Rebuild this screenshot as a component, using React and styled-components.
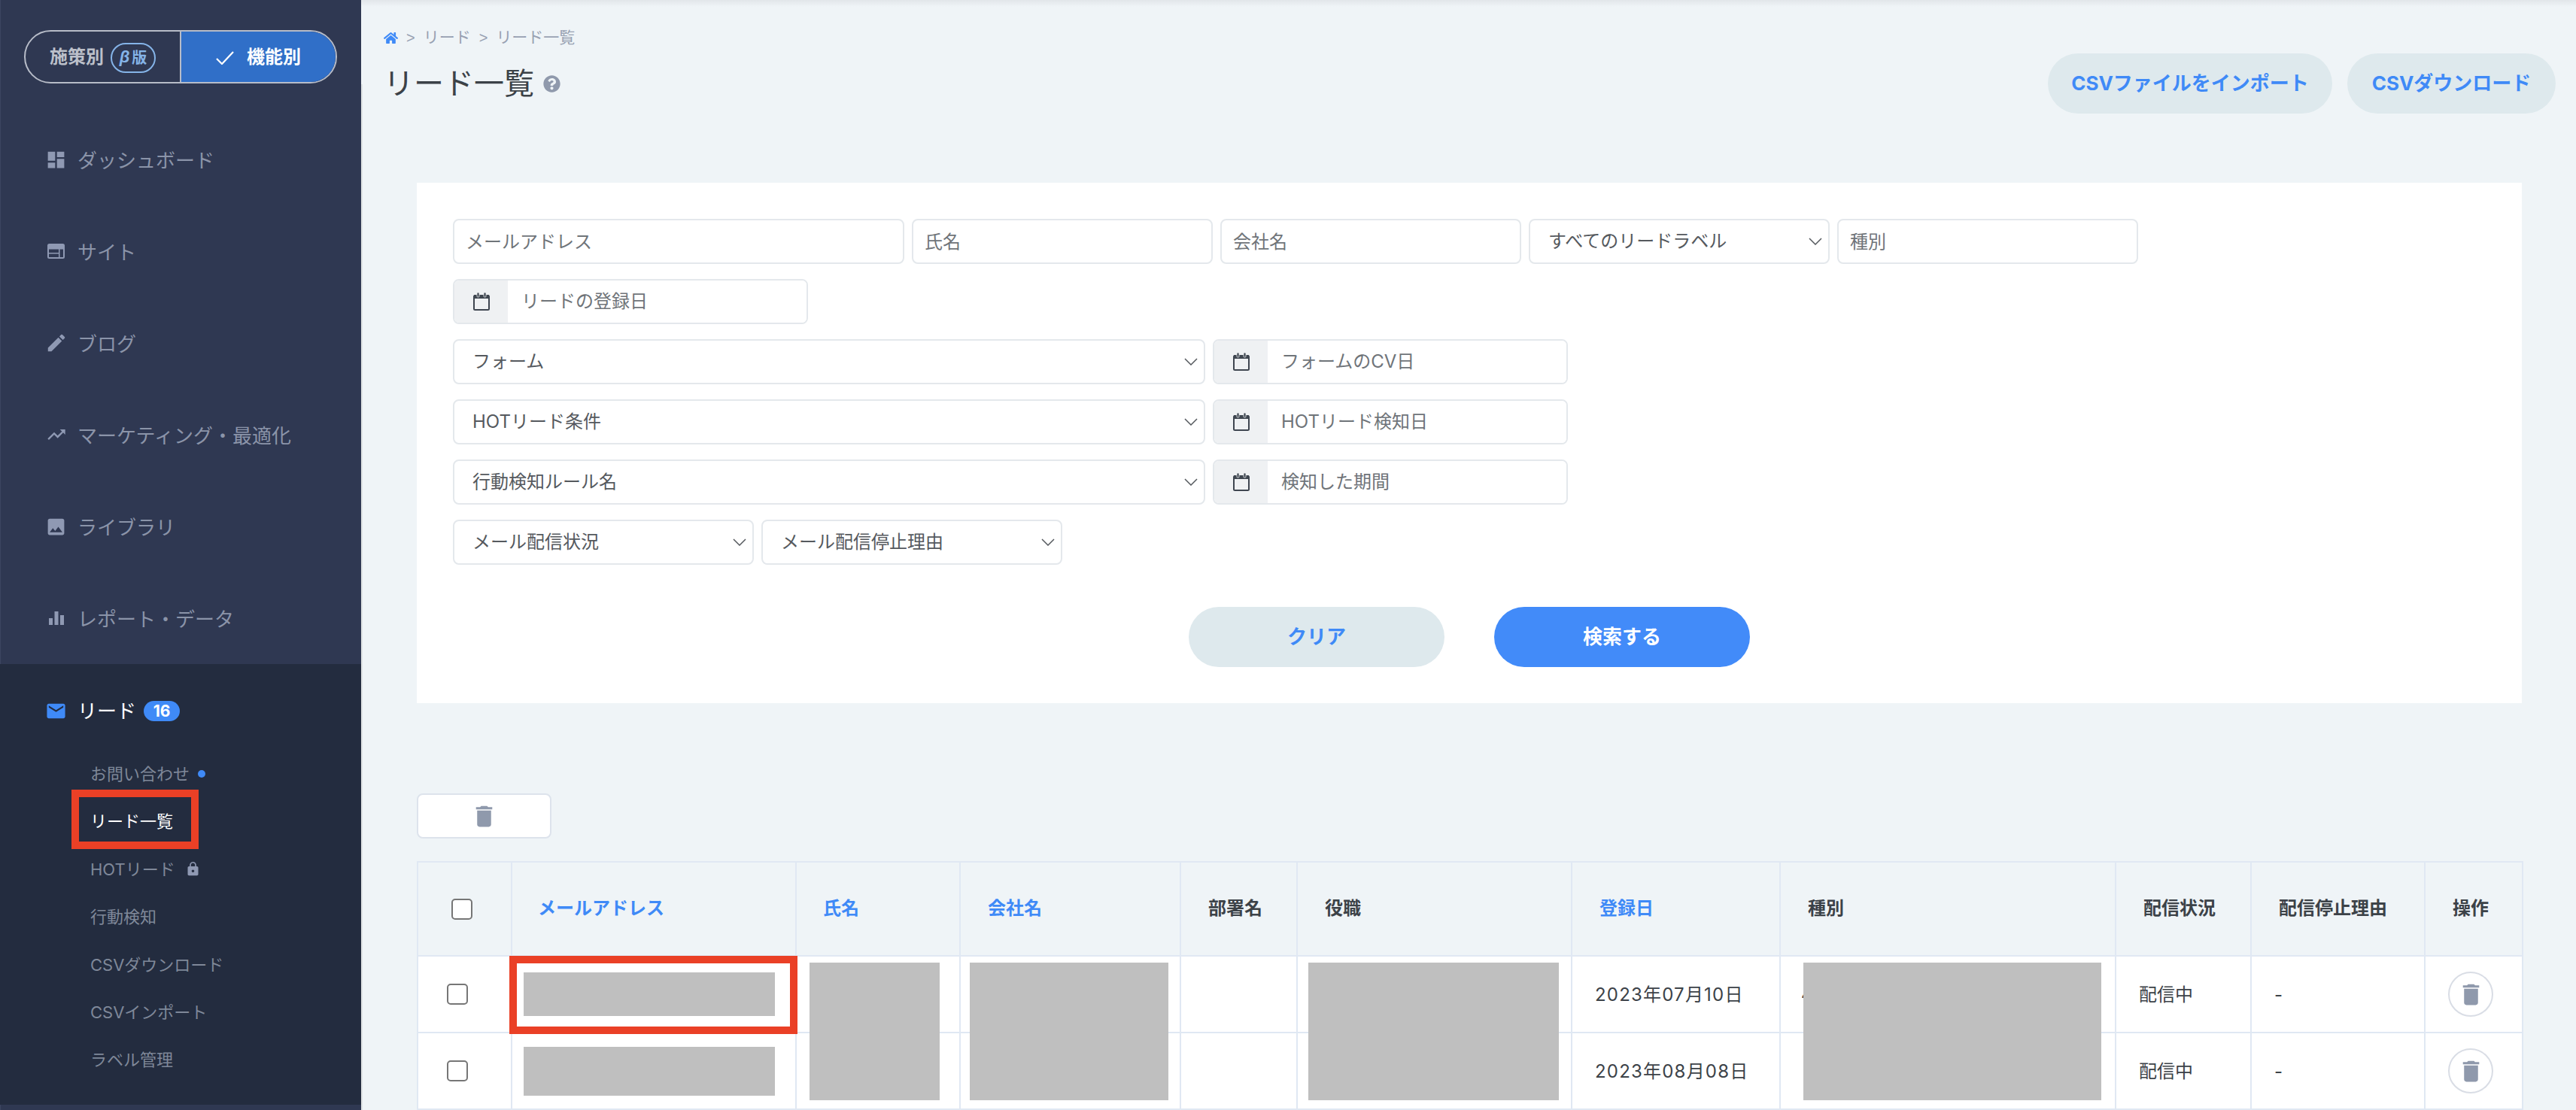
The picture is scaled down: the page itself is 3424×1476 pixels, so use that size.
import React from 'react'
import styled, { createGlobalStyle } from 'styled-components'
import { MdDashboard, MdEdit, MdTrendingUp, MdImage, MdEmail, MdDelete, MdLock } from 'react-icons/md'
import { FaHome, FaQuestionCircle } from 'react-icons/fa'

const BLUE = '#3f8af7'
const FONT = `Inter, "Noto Sans CJK JP", "Noto Sans", sans-serif`

const GlobalStyle = createGlobalStyle`
  html, body {
    margin: 0;
    padding: 0;
    background: #eff4f7;
    overflow: hidden;
  }
  body, input, select, button {
    font-family: ${FONT};
    line-height: 1.2;
  }
`

const Page = styled.div`
  display: flex;
  width: 3424px;
  height: 1476px;
  overflow: hidden;
`

const Sidebar = styled.aside`
  width: 480px;
  flex: none;
  background: #2f3852;
  box-shadow: inset 1px 0 0 #3c4560;
  padding-top: 40px;
  box-sizing: border-box;
`

const Toggle = styled.div`
  display: flex;
  width: 416px;
  height: 71px;
  margin: 0 0 40px 32px;
  box-sizing: border-box;
  border: 2px solid #b7bcc8;
  border-radius: 36px;
  overflow: hidden;
`

const ToggleSide = styled.div`
  flex: 1;
  display: flex;
  align-items: center;
  justify-content: center;
  gap: ${(props) => (props.$active ? '17px' : '9px')};
  padding-top: 2px;
  font-size: 24px;
  font-weight: 700;
  color: ${(props) => (props.$active ? '#fff' : '#bcc0ca')};
  background: ${(props) => (props.$active ? '#306fc8' : 'transparent')};
  border-left: ${(props) => (props.$active ? '2px solid #b7bcc8' : '0')};
`

const BetaBadge = styled.span`
  display: flex;
  align-items: center;
  justify-content: center;
  gap: 3px;
  width: 60px;
  height: 40px;
  box-sizing: border-box;
  border: 2px solid #85b4e8;
  border-radius: 20px;
  font-size: 20px;
  color: #85b4e8;

  i {
    font-family: "Liberation Sans", sans-serif;
    font-size: 22px;
  }
`

const NavItem = styled.div`
  display: flex;
  align-items: center;
  height: 122px;
  padding-left: 63px;
  font-size: 26px;
  color: #8b94a9;
`

const NavLabel = styled.span`
  padding-top: 3px;
`

const NavIcon = styled.span`
  display: flex;
  align-items: center;
  justify-content: center;
  width: 23px;
  height: 30px;
  margin-right: 17px;
  color: ${(props) => props.$color || '#8f99b3'};

  svg {
    flex: none;
  }
`

const LeadPanel = styled.div`
  position: relative;
  background: #232c3f;
  padding-bottom: 29px;
`

const LeadRow = styled.div`
  display: flex;
  align-items: center;
  height: 101px;
  padding: 12px 0 0 63px;
  font-size: 26px;
  color: #fff;
`

const CountBadge = styled.span`
  display: flex;
  align-items: center;
  justify-content: center;
  width: 48px;
  height: 27px;
  margin-left: 10px;
  border-radius: 14px;
  background: ${BLUE};
  font-size: 21px;
  font-weight: 700;
  color: #fff;
`

const SubItem = styled.div`
  display: flex;
  align-items: center;
  height: 63.4px;
  box-sizing: border-box;
  padding: 3px 0 0 120px;
  font-size: 22px;
  color: ${(props) => (props.$active ? '#fff' : '#7f8899')};
`

const Dot = styled.span`
  width: 10px;
  height: 10px;
  margin-left: 11px;
  border-radius: 50%;
  background: ${BLUE};
`

const LockIcon = styled(MdLock)`
  margin-left: 13px;
  color: #8f99b3;
`

const Callout = styled.div`
  position: absolute;
  left: ${(props) => props.$left}px;
  top: ${(props) => props.$top}px;
  width: ${(props) => props.$width}px;
  height: ${(props) => props.$height}px;
  box-sizing: border-box;
  border: 10px solid #ea4026;
  pointer-events: none;
`

const Main = styled.main`
  position: relative;
  flex: 1;
  min-width: 0;
  background: linear-gradient(#e2e6ea, #eff4f7 9px);

  &::before {
    content: '';
    position: absolute;
    left: 0;
    top: 112px;
    bottom: 0;
    width: 2px;
    background: #dfe3e5;
  }
`

const Header = styled.header`
  display: flex;
  justify-content: space-between;
  height: 243px;
  box-sizing: border-box;
  padding: 36px 27px 0 30px;
`

const Breadcrumb = styled.nav`
  display: flex;
  align-items: center;
  height: 28px;
  font-size: 21px;
  color: #98a1b2;
  gap: 11px;

  svg {
    color: ${BLUE};
  }
`

const Crumb = styled.span`
  font-size: ${(props) => (props.$sep ? '20px' : '21px')};
  font-family: ${(props) => (props.$sep ? '"Liberation Sans", sans-serif' : FONT)};
`

const Title = styled.h1`
  display: flex;
  align-items: center;
  height: 60px;
  margin: 17px 0 0;
  font-size: 40px;
  font-weight: 400;
  color: #3c4248;

  svg {
    margin-left: 12px;
    color: #8f99ac;
  }
`

const HeaderActions = styled.div`
  display: flex;
  gap: 20px;
  padding-top: 35px;
`

const PillButton = styled.button`
  height: 80px;
  width: ${(props) => props.$width}px;
  padding: 0;
  border: 0;
  border-radius: 40px;
  font-size: 26px;
  font-weight: 700;
  color: ${(props) => (props.$primary ? '#fff' : BLUE)};
  background: ${(props) => (props.$primary ? '#428bf9' : '#dee9ed')};
`

const FilterCard = styled.section`
  margin: 0 72px 0 74px;
  padding: 48px;
  background: #fff;
`

const FilterRow = styled.div`
  display: flex;
  gap: 10px;
  margin-bottom: 20px;
`

const Field = styled.input`
  width: ${(props) => props.$width}px;
  height: 60px;
  box-sizing: border-box;
  padding: 0 15px;
  border: 2px solid #e4e8ec;
  border-radius: 8px;
  background: #fff;
  font-size: 24px;
  color: #6f7479;

  &::placeholder {
    color: #6f7479;
    opacity: 1;
  }
`

const DateGroup = styled.div`
  display: flex;
  width: 472px;
  height: 60px;
  box-sizing: border-box;
  border: 2px solid #e4e8ec;
  border-radius: 8px;
  overflow: hidden;
`

const DateAddon = styled.span`
  display: flex;
  align-items: center;
  justify-content: center;
  width: 71px;
  flex: none;
  background: #eff1f3;
`

const DateInput = styled.input`
  flex: 1;
  min-width: 0;
  padding: 0 18px;
  border: 0;
  font-size: 24px;

  &::placeholder {
    color: #6f7479;
    opacity: 1;
  }
`

const SelectWrap = styled.div`
  position: relative;
  width: ${(props) => props.$width}px;
  height: 60px;

  svg {
    position: absolute;
    right: 10px;
    top: 25px;
    pointer-events: none;
  }
`

const Select = styled.select`
  appearance: none;
  width: 100%;
  height: 100%;
  box-sizing: border-box;
  padding: 0 36px 0 24px;
  border: 2px solid #e4e8ec;
  border-radius: 8px;
  background: #fff;
  font-size: 24px;
  color: #55595e;
`

const FilterActions = styled.div`
  display: flex;
  justify-content: center;
  gap: 66px;
  margin-top: 56px;
`

const BulkBar = styled.div`
  margin: 120px 0 30px 74px;
`

const BulkDelete = styled.button`
  display: flex;
  align-items: center;
  justify-content: center;
  width: 179px;
  height: 60px;
  padding: 0;
  border: 2px solid #dde3ec;
  border-radius: 8px;
  background: #fff;
  color: #8f99ac;
`

const TableWrap = styled.div`
  position: relative;
  width: 2800px;
  margin-left: 74px;
`

const Table = styled.table`
  width: 2800px;
  table-layout: fixed;
  border-collapse: collapse;
`

const HeadCell = styled.th`
  height: 125px;
  box-sizing: border-box;
  padding: 0 0 0 ${(props) => props.$pad || 36}px;
  border: 2px solid #e0e8f3;
  background: #eff4f7;
  text-align: left;
  vertical-align: middle;
  font-size: 24px;
  font-weight: 700;
  color: ${(props) => (props.$sortable ? BLUE : '#3c4248')};
`

const BodyCell = styled.td`
  height: 102px;
  box-sizing: border-box;
  padding: 0 0 0 ${(props) => props.$pad || 30}px;
  border: 2px solid #e0e8f3;
  background: #fff;
  vertical-align: middle;
  font-size: 24px;
  color: #3c4248;
`

const CellText = styled.div`
  padding-top: 3px;
  letter-spacing: ${(props) => (props.$wide ? '1.2px' : '0')};
`

const Check = styled.input.attrs({ type: 'checkbox' })`
  appearance: none;
  display: block;
  width: 28px;
  height: 28px;
  margin: 0;
  border: 2px solid #767676;
  border-radius: 5px;
  background: #fff;
`

const RoundDelete = styled.button`
  display: flex;
  align-items: center;
  justify-content: center;
  width: 60px;
  height: 60px;
  padding: 0;
  border: 2px solid #d9dde5;
  border-radius: 50%;
  background: #fff;
  color: #8f99ac;
`

const Redaction = styled.div`
  background: #bfbfbf;
  width: ${(props) => props.$width}px;
  height: ${(props) => props.$height}px;
`

const RedactionOver = styled(Redaction)`
  position: absolute;
  left: ${(props) => props.$left}px;
  top: 135px;
`

const SiteIcon = () => (
  <svg width='23' height='20' viewBox='0 0 23 20'>
    <path
      fill='currentColor'
      fillRule='evenodd'
      d='M2.5 0h18A2.5 2.5 0 0 1 23 2.5v15a2.5 2.5 0 0 1-2.5 2.5h-18A2.5 2.5 0 0 1 0 17.500v-15A2.500 2.500 0 0 1 2.500 0zM2 7.500V12h13V7.500zM2 13.500V18h13v-4.500zM16.500 7.500V18H21V7.500z'
    />
  </svg>
)

const BarsIcon = () => (
  <svg width='20' height='18' viewBox='0 0 20 18'>
    <rect x='0' y='9' width='5' height='9' fill='currentColor' />
    <rect x='7.500' y='0' width='5' height='18' fill='currentColor' />
    <rect x='15' y='5' width='5' height='13' fill='currentColor' />
  </svg>
)

const CalendarIcon = () => (
  <svg width='22' height='24' viewBox='0 0 22 24'>
    <rect x='1' y='4' width='20' height='19' rx='1.500' fill='none' stroke='#3f4650' strokeWidth='2' />
    <rect x='1' y='3' width='20' height='5' fill='#3f4650' />
    <rect x='5' y='0' width='3' height='6' rx='1' fill='#3f4650' stroke='#eff1f3' strokeWidth='0.800' />
    <rect x='14' y='0' width='3' height='6' rx='1' fill='#3f4650' stroke='#eff1f3' strokeWidth='0.800' />
  </svg>
)

const Chevron = () => (
  <svg width='18' height='10' viewBox='0 0 18 10'>
    <path d='M1 1l8 8 8-8' fill='none' stroke='#55595e' strokeWidth='1.500' />
  </svg>
)

const NAV_ITEMS = [
  { label: 'ダッシュボード', icon: <MdDashboard size={29} /> },
  { label: 'サイト', icon: <SiteIcon /> },
  { label: 'ブログ', icon: <MdEdit size={30} /> },
  { label: 'マーケティング・最適化', icon: <MdTrendingUp size={28} /> },
  { label: 'ライブラリ', icon: <MdImage size={29} /> },
  { label: 'レポート・データ', icon: <BarsIcon /> },
]

const COLUMNS = [
  { width: 125 },
  { label: 'メールアドレス', width: 378, sortable: true, pad: 34 },
  { label: '氏名', width: 218, sortable: true, pad: 35 },
  { label: '会社名', width: 293, sortable: true },
  { label: '部署名', width: 155 },
  { label: '役職', width: 365 },
  { label: '登録日', width: 277, sortable: true },
  { label: '種別', width: 446 },
  { label: '配信状況', width: 180 },
  { label: '配信停止理由', width: 231 },
  { label: '操作', width: 130, pad: 36 },
]

const ROWS = [
  { date: '2023年07月10日', kind: '4', emailHeight: 58 },
  { date: '2023年08月08日', emailHeight: 65 },
]

function DateField ({ placeholder }) {
  return (
    <DateGroup>
      <DateAddon><CalendarIcon /></DateAddon>
      <DateInput placeholder={placeholder} />
    </DateGroup>
  )
}

function SelectField ({ width, children }) {
  return (
    <SelectWrap $width={width}>
      <Select defaultValue={children}>
        <option>{children}</option>
      </Select>
      <Chevron />
    </SelectWrap>
  )
}

export default function App () {
  return (
    <Page>
      <GlobalStyle />
      <Sidebar>
        <Toggle>
          <ToggleSide>
            施策別
            <BetaBadge><i>β</i>版</BetaBadge>
          </ToggleSide>
          <ToggleSide $active>
            <svg width='24' height='18' viewBox='0 0 24 18'>
              <path d='M1 10l7 7L23 1' fill='none' stroke='#fff' strokeWidth='2.200' />
            </svg>
            機能別
          </ToggleSide>
        </Toggle>

        {NAV_ITEMS.map((item) => (
          <NavItem key={item.label}>
            <NavIcon>{item.icon}</NavIcon>
            <NavLabel>{item.label}</NavLabel>
          </NavItem>
        ))}

        <LeadPanel>
          <LeadRow>
            <NavIcon $color={BLUE}><MdEmail size={29} /></NavIcon>
            リード
            <CountBadge>16</CountBadge>
          </LeadRow>
          <SubItem>お問い合わせ<Dot /></SubItem>
          <SubItem $active>リード一覧</SubItem>
          <SubItem>HOTリード<LockIcon size={21} /></SubItem>
          <SubItem>行動検知</SubItem>
          <SubItem>CSVダウンロード</SubItem>
          <SubItem>CSVインポート</SubItem>
          <SubItem>ラベル管理</SubItem>
          <Callout $left={95} $top={167} $width={169} $height={79} />
        </LeadPanel>
      </Sidebar>

      <Main>
        <Header>
          <div>
            <Breadcrumb>
              <FaHome size={19} />
              <Crumb $sep>&gt;</Crumb>
              <Crumb>リード</Crumb>
              <Crumb $sep>&gt;</Crumb>
              <Crumb>リード一覧</Crumb>
            </Breadcrumb>
            <Title>
              リード一覧
              <FaQuestionCircle size={23} />
            </Title>
          </div>
          <HeaderActions>
            <PillButton $width={378}>CSVファイルをインポート</PillButton>
            <PillButton $width={277}>CSVダウンロード</PillButton>
          </HeaderActions>
        </Header>

        <FilterCard>
          <FilterRow>
            <Field $width={600} placeholder='メールアドレス' />
            <Field $width={400} placeholder='氏名' />
            <Field $width={400} placeholder='会社名' />
            <SelectField width={400}>すべてのリードラベル</SelectField>
            <Field $width={400} placeholder='種別' />
          </FilterRow>
          <FilterRow>
            <DateField placeholder='リードの登録日' />
          </FilterRow>
          <FilterRow>
            <SelectField width={1000}>フォーム</SelectField>
            <DateField placeholder='フォームのCV日' />
          </FilterRow>
          <FilterRow>
            <SelectField width={1000}>HOTリード条件</SelectField>
            <DateField placeholder='HOTリード検知日' />
          </FilterRow>
          <FilterRow>
            <SelectField width={1000}>行動検知ルール名</SelectField>
            <DateField placeholder='検知した期間' />
          </FilterRow>
          <FilterRow>
            <SelectField width={400}>メール配信状況</SelectField>
            <SelectField width={400}>メール配信停止理由</SelectField>
          </FilterRow>
          <FilterActions>
            <PillButton $width={340}>クリア</PillButton>
            <PillButton $width={340} $primary>検索する</PillButton>
          </FilterActions>
        </FilterCard>

        <BulkBar>
          <BulkDelete><MdDelete size={37} /></BulkDelete>
        </BulkBar>

        <TableWrap>
          <Table>
            <colgroup>
              {COLUMNS.map((col, i) => <col key={i} width={col.width} />)}
            </colgroup>
            <thead>
              <tr>
                {COLUMNS.map((col, i) => (
                  <HeadCell key={i} $sortable={col.sortable} $pad={i === 0 ? 44 : col.pad}>
                    {col.label || <Check />}
                  </HeadCell>
                ))}
              </tr>
            </thead>
            <tbody>
              {ROWS.map((row) => (
                <tr key={row.date}>
                  <BodyCell $pad={38}><Check /></BodyCell>
                  <BodyCell $pad={15}><Redaction $width={334} $height={row.emailHeight} /></BodyCell>
                  <BodyCell />
                  <BodyCell />
                  <BodyCell />
                  <BodyCell />
                  <BodyCell><CellText $wide>{row.date}</CellText></BodyCell>
                  <BodyCell $pad={27}><CellText>{row.kind}</CellText></BodyCell>
                  <BodyCell><CellText>配信中</CellText></BodyCell>
                  <BodyCell><CellText>-</CellText></BodyCell>
                  <BodyCell><RoundDelete><MdDelete size={37} /></RoundDelete></BodyCell>
                </tr>
              ))}
            </tbody>
          </Table>
          <RedactionOver $left={522} $width={173} $height={183} />
          <RedactionOver $left={735} $width={264} $height={183} />
          <RedactionOver $left={1185} $width={333} $height={183} />
          <RedactionOver $left={1843} $width={396} $height={183} />
          <Callout $left={123} $top={126} $width={383} $height={104} />
        </TableWrap>
      </Main>
    </Page>
  )
}
